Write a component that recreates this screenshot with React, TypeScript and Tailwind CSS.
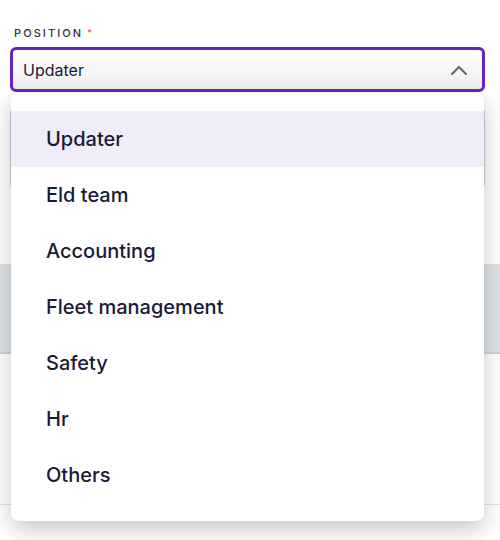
import React from "react";

const items = ["Updater", "Eld team", "Accounting", "Fleet management", "Safety", "Hr", "Others"];

export default function App() {
  return (
    <div className="relative w-[500px] h-[540px] overflow-hidden bg-white" style={{ fontFamily: "Inter, 'Noto Sans', sans-serif" }}>
      <div className="flex flex-col px-[10px] pt-[26px]">
        <div className="flex items-start pl-[4px] h-[14px] text-[11px] leading-[14px] font-medium tracking-[0.19em] text-[#2f2f45]">
          POSITION<span className="ml-[4px] text-[9px] text-[#e5484d]">*</span>
        </div>
        <div className="mt-[7px] flex h-[45px] w-[475px] items-center justify-between rounded-[6px] border-[3px] border-[#6a22c6] bg-gradient-to-b from-white to-[#eeeeee] pl-[10px] pr-[14px]">
          <span className="text-[16px] text-[#1b1b36]">Updater</span>
          <svg width="18" height="12" viewBox="0 0 18 12" fill="none">
            <path d="M2 10 L9 3 L16 10" stroke="#6b6b6b" strokeWidth="2.2" strokeLinecap="round" strokeLinejoin="round" />
          </svg>
        </div>
        <div className="mt-[14px] h-[84px] w-[475px] rounded-[6px] border border-[#cfcfcf] bg-gradient-to-b from-white to-[#eeeeee]" />
        <div className="mt-[74px] -mx-[10px] h-[90px] border-b-2 border-[#cfd3d7] bg-[#dfe2e5]" />
        <div className="mt-[150px] -mx-[10px] h-px bg-[#dcdfe3]" />
      </div>

      <div className="absolute left-[11px] top-[93px] w-[473px] rounded-[8px] bg-white pt-[18px] pb-[18px] shadow-[0_8px_22px_rgba(0,0,0,0.22)]">
        {items.map((it, i) => (
          <div
            key={it}
            className={`flex h-[56px] items-center pl-[35px] text-[20px] font-medium text-[#1a1a35] ${i === 0 ? "bg-[#f0ecfa]" : ""}`}
          >
            {it}
          </div>
        ))}
      </div>
    </div>
  );
}
